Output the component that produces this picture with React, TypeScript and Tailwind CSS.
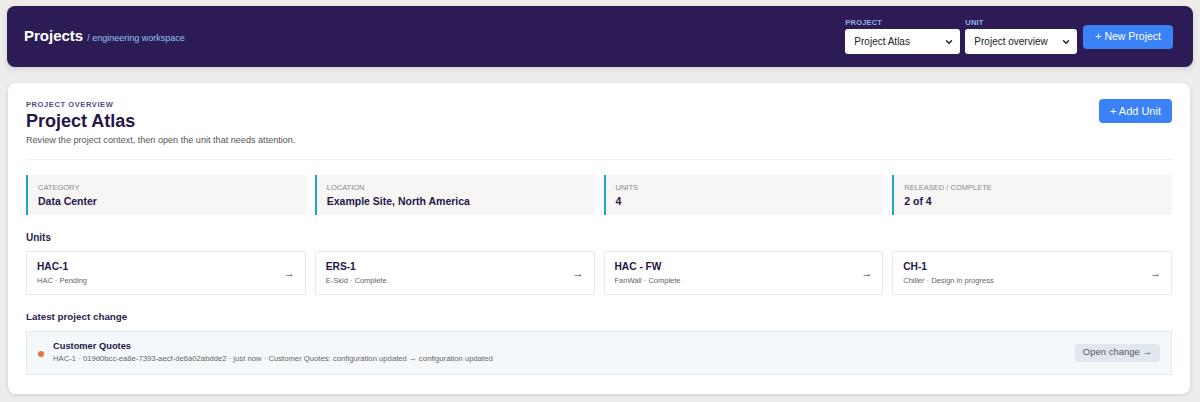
import { ChevronDown } from "lucide-react";

const stats = [
  { label: "Category", value: "Data Center" },
  { label: "Location", value: "Example Site, North America" },
  { label: "Units", value: "4" },
  { label: "Released / Complete", value: "2 of 4" },
];

const units = [
  { name: "HAC-1", meta: "HAC · Pending" },
  { name: "ERS-1", meta: "E-Skid · Complete" },
  { name: "HAC - FW", meta: "FanWall · Complete" },
  { name: "CH-1", meta: "Chiller · Design in progress" },
];

function Select({ label, value, width }: { label: string; value: string; width: string }) {
  return (
    <div className="flex flex-col">
      <span className="text-[7.5px] font-bold uppercase tracking-wide text-[#8fb3ea] leading-none mb-[3px]">{label}</span>
      <div className={`${width} h-[25px] bg-white rounded-[3px] flex items-center justify-between pl-[9px] pr-[6px] text-[10px] text-[#222]`}>
        <span>{value}</span>
        <ChevronDown size={10} strokeWidth={3.5} className="text-[#222]" />
      </div>
    </div>
  );
}

export default function App() {
  return (
    <div className="min-h-[402px] bg-[#efedeb] px-[7px] pt-[6px] pb-[9px] font-['Liberation_Sans',Arial,sans-serif]">
      <header className="h-[61px] bg-[#2d1b56] rounded-[8px] flex items-center justify-between pl-[17px] pr-[20px] shadow-[0_2px_6px_rgba(0,0,0,0.12)]">
        <div className="flex items-baseline gap-[4px]">
          <h1 className="text-[15px] font-bold text-white">Projects</h1>
          <span className="text-[9px] text-[#8ec5f5]">/ engineering workspace</span>
        </div>
        <div className="flex items-center gap-[5px]">
          <Select label="Project" value="Project Atlas" width="w-[115px]" />
          <Select label="Unit" value="Project overview" width="w-[112px]" />
          <button className="ml-[1px] h-[24px] px-[12px] bg-[#3b82f6] text-white text-[10.5px] rounded-[4px]">+ New Project</button>
        </div>
      </header>

      <main className="mt-[16px] ml-[1px] mr-[3px] bg-white rounded-[8px] shadow-[0_1px_4px_rgba(0,0,0,0.12)] px-[18px] pt-[16px] pb-[19px]">
        <div className="flex justify-between items-start">
          <div>
            <div className="text-[7.5px] font-bold uppercase tracking-[0.08em] text-[#4f4a8c]">Project overview</div>
            <h2 className="text-[18px] font-bold text-[#24164a] leading-[22px]">Project Atlas</h2>
            <p className="text-[9.1px] text-[#555] mt-[2px]">Review the project context, then open the unit that needs attention.</p>
          </div>
          <button className="h-[24px] px-[11px] bg-[#3b82f6] text-white text-[11px] rounded-[4px]">+ Add Unit</button>
        </div>
        <div className="h-px bg-[#efeff5] mt-[11px]" />

        <div className="grid grid-cols-4 gap-[9px] mt-[15px]">
          {stats.map((s) => (
            <div key={s.label} className="h-[40px] bg-[#f7f6f4] border-l-2 border-[#20a4c8] pl-[10px] pt-[9px]">
              <div className="text-[7.5px] uppercase text-[#8a8a8a] leading-none">{s.label}</div>
              <div className="text-[10.5px] font-bold text-[#24164a] mt-[3px]">{s.value}</div>
            </div>
          ))}
        </div>

        <h3 className="text-[10px] font-bold text-[#2b2350] mt-[15px]">Units</h3>
        <div className="grid grid-cols-4 gap-[9px] mt-[6px]">
          {units.map((u) => (
            <div key={u.name} className="h-[44px] border border-[#e6e7ee] rounded-[2px] flex items-center justify-between pl-[10px] pr-[10px]">
              <div>
                <div className="text-[10.2px] font-bold text-[#24164a] leading-[13px]">{u.name}</div>
                <div className="text-[7.5px] text-[#666] mt-[2px]">{u.meta}</div>
              </div>
              <span className="text-[11px] text-[#333]">→</span>
            </div>
          ))}
        </div>

        <h3 className="text-[9.8px] font-bold text-[#2b2350] mt-[15px]">Latest project change</h3>
        <div className="mt-[6px] h-[44px] bg-[#f4f8fb] border border-[#e2e8ee] flex items-center justify-between pl-[11px] pr-[11px]">
          <div className="flex items-center gap-[9px]">
            <span className="w-[6px] h-[6px] rounded-full bg-[#ea6f3c] mt-[2px]" />
            <div>
              <div className="text-[9.3px] font-bold text-[#24164a] leading-[12px]">Customer Quotes</div>
              <div className="text-[7.7px] text-[#666] mt-[1px]">HAC-1 · 019d0bcc-ea8e-7393-aecf-de6a02abdde2 · just now · Customer Quotes: configuration updated → configuration updated</div>
            </div>
          </div>
          <button className="h-[18px] px-[8px] bg-[#e2e6ee] rounded-[3px] text-[9.5px] text-[#555]">Open change →</button>
        </div>
      </main>
    </div>
  );
}
